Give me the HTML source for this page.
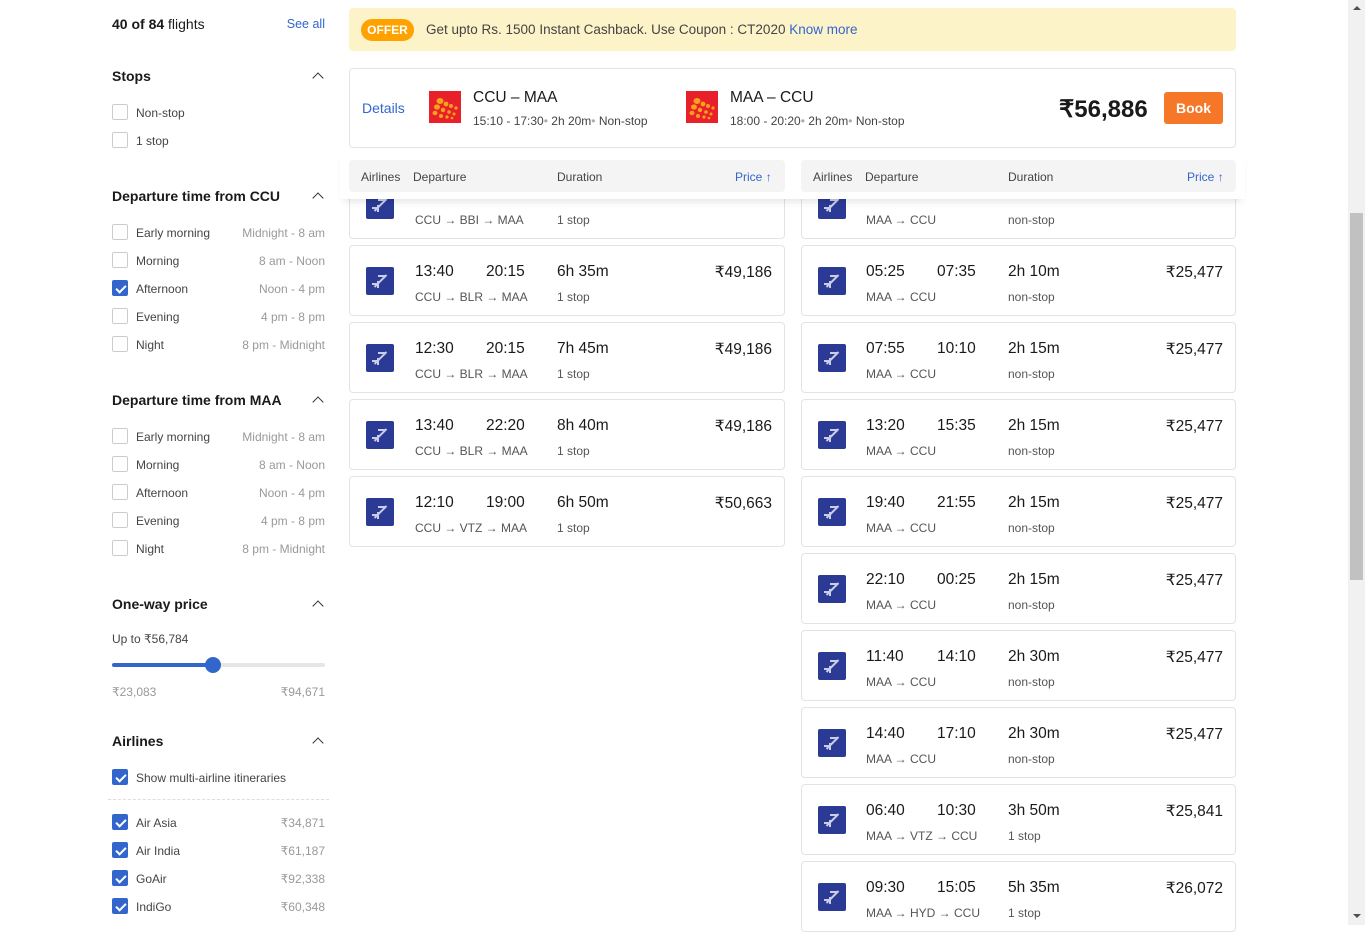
<!DOCTYPE html>
<html><head><meta charset="utf-8"><style>
*{margin:0;padding:0;box-sizing:border-box}
body{width:1365px;height:925px;overflow:hidden;background:#fff;font-family:"Liberation Sans",Arial,sans-serif;color:#1a1a1a;position:relative}
.a{position:absolute;white-space:nowrap}
.h{font-size:14px;font-weight:bold;color:#1a1a1a;transform:translateY(-50%)}
.chev{position:absolute;width:8px;height:8px;border-left:1.6px solid #333;border-top:1.6px solid #333;transform:rotate(45deg)}
.cb{position:absolute;width:16px;height:16px;border:1px solid #ccc;border-radius:2px;background:#fff}
.cb.on{background:#3366cc;border-color:#3366cc}
.cb.on:after{content:"";position:absolute;left:4.5px;top:1.5px;width:4px;height:8px;border-right:2px solid #fff;border-bottom:2px solid #fff;transform:rotate(45deg)}
.lb{font-size:12px;color:#444;transform:translateY(-50%)}
.rt{font-size:12px;color:#999;transform:translateY(-50%);text-align:right}
.card{position:absolute;border:1px solid #e3e3e3;border-radius:4px;background:#fff}
.ic{position:absolute;width:28px;height:28px;background:#2b3a95;border-radius:2px;overflow:hidden}
.ic i{position:absolute;background:#c9cde8}
.ic .l1{left:6px;top:13px;width:17px;height:2px;transform:rotate(-45deg)}
.ic .l2{left:12px;top:8px;width:8px;height:2px}
.ic .l3{left:11px;top:14px;width:2px;height:7px}
.ic .l4{left:6px;top:16px;width:5px;height:2px}
.t{position:absolute;font-size:15.5px;color:#1a1a1a;top:17px}
.s{position:absolute;font-size:12px;color:#555;top:44px}
.p{position:absolute;font-size:15.5px;color:#1a1a1a;top:17px;text-align:right}
.hd{position:absolute;background:#f4f4f4;border-radius:4px;height:32px;font-size:12px;color:#444}
.hd span{position:absolute;top:10px}
</style></head><body>

<div class="a" style="left:112px;top:16px;font-size:14px"><b>40 of 84</b> flights</div>
<div class="a" style="right:1040px;top:17px;font-size:12.5px;color:#3366cc">See all</div>

<div class="a h" style="left:112px;top:76px">Stops</div><div class="chev" style="left:314px;top:74px"></div>
<div class="cb" style="left:112px;top:104px"></div><div class="a lb" style="left:136px;top:113px">Non-stop</div>
<div class="cb" style="left:112px;top:132px"></div><div class="a lb" style="left:136px;top:141px">1 stop</div>

<div class="a h" style="left:112px;top:196px">Departure time from CCU</div><div class="chev" style="left:314px;top:194px"></div>
<div class="cb" style="left:112px;top:224px"></div><div class="a lb" style="left:136px;top:233px">Early morning</div><div class="a rt" style="right:1040px;top:233px">Midnight - 8 am</div>
<div class="cb" style="left:112px;top:252px"></div><div class="a lb" style="left:136px;top:261px">Morning</div><div class="a rt" style="right:1040px;top:261px">8 am - Noon</div>
<div class="cb on" style="left:112px;top:280px"></div><div class="a lb" style="left:136px;top:289px">Afternoon</div><div class="a rt" style="right:1040px;top:289px">Noon - 4 pm</div>
<div class="cb" style="left:112px;top:308px"></div><div class="a lb" style="left:136px;top:317px">Evening</div><div class="a rt" style="right:1040px;top:317px">4 pm - 8 pm</div>
<div class="cb" style="left:112px;top:336px"></div><div class="a lb" style="left:136px;top:345px">Night</div><div class="a rt" style="right:1040px;top:345px">8 pm - Midnight</div>

<div class="a h" style="left:112px;top:400px">Departure time from MAA</div><div class="chev" style="left:314px;top:398px"></div>
<div class="cb" style="left:112px;top:428px"></div><div class="a lb" style="left:136px;top:437px">Early morning</div><div class="a rt" style="right:1040px;top:437px">Midnight - 8 am</div>
<div class="cb" style="left:112px;top:456px"></div><div class="a lb" style="left:136px;top:465px">Morning</div><div class="a rt" style="right:1040px;top:465px">8 am - Noon</div>
<div class="cb" style="left:112px;top:484px"></div><div class="a lb" style="left:136px;top:493px">Afternoon</div><div class="a rt" style="right:1040px;top:493px">Noon - 4 pm</div>
<div class="cb" style="left:112px;top:512px"></div><div class="a lb" style="left:136px;top:521px">Evening</div><div class="a rt" style="right:1040px;top:521px">4 pm - 8 pm</div>
<div class="cb" style="left:112px;top:540px"></div><div class="a lb" style="left:136px;top:549px">Night</div><div class="a rt" style="right:1040px;top:549px">8 pm - Midnight</div>

<div class="a h" style="left:112px;top:604px">One-way price</div><div class="chev" style="left:314px;top:602px"></div>
<div class="a lb" style="left:112px;top:639px;color:#444">Up to ₹56,784</div>
<div class="a" style="left:112px;top:663px;width:213px;height:4px;background:#e6e6e6;border-radius:2px"></div>
<div class="a" style="left:112px;top:663px;width:101px;height:4px;background:#3366cc;border-radius:2px"></div>
<div class="a" style="left:205px;top:657px;width:16px;height:16px;background:#3366cc;border-radius:50%"></div>
<div class="a rt" style="left:112px;top:692px;text-align:left">₹23,083</div>
<div class="a rt" style="right:1040px;top:692px">₹94,671</div>

<div class="a h" style="left:112px;top:741px">Airlines</div><div class="chev" style="left:314px;top:739px"></div>
<div class="cb on" style="left:112px;top:769px"></div><div class="a lb" style="left:136px;top:778px">Show multi-airline itineraries</div>
<div class="a" style="left:108px;top:799px;width:221px;border-top:1px dashed #ddd"></div>
<div class="cb on" style="left:112px;top:814px"></div><div class="a lb" style="left:136px;top:823px">Air Asia</div><div class="a rt" style="right:1040px;top:823px">₹34,871</div>
<div class="cb on" style="left:112px;top:842px"></div><div class="a lb" style="left:136px;top:851px">Air India</div><div class="a rt" style="right:1040px;top:851px">₹61,187</div>
<div class="cb on" style="left:112px;top:870px"></div><div class="a lb" style="left:136px;top:879px">GoAir</div><div class="a rt" style="right:1040px;top:879px">₹92,338</div>
<div class="cb on" style="left:112px;top:898px"></div><div class="a lb" style="left:136px;top:907px">IndiGo</div><div class="a rt" style="right:1040px;top:907px">₹60,348</div>

<div class="a" style="left:349px;top:8px;width:887px;height:43px;background:#fdf3c9;border-radius:4px"></div>
<div class="a" style="left:361px;top:19px;width:53px;height:22px;background:#ffa200;border-radius:11px;color:#fff;font-size:12px;font-weight:bold;text-align:center;line-height:22px">OFFER</div>
<div class="a" style="left:426px;top:22px;font-size:13.5px;color:#444">Get upto Rs. 1500 Instant Cashback. Use Coupon : CT2020 <span style="color:#3366cc">Know more</span></div>

<div class="card" style="left:349px;top:68px;width:887px;height:80px"></div>
<div class="a" style="left:362px;top:100px;font-size:14px;color:#3366cc">Details</div>
<svg class="a" style="left:429px;top:91px" width="32" height="32"><rect width="32" height="32" fill="#e8202a"/><g fill="#f7a21b"><ellipse cx="11" cy="10" rx="3.5" ry="3"/><ellipse cx="8" cy="16" rx="3" ry="2.6"/><ellipse cx="6" cy="22" rx="2.5" ry="2.2"/><circle cx="17" cy="13" r="2.4"/><circle cx="14" cy="19" r="2.2"/><circle cx="12" cy="25" r="2"/><circle cx="22" cy="15" r="2"/><circle cx="20" cy="21" r="1.8"/><circle cx="18" cy="26" r="1.6"/><circle cx="27" cy="17" r="1.6"/><circle cx="25" cy="23" r="1.5"/><circle cx="23" cy="27" r="1.3"/></g></svg>
<div class="a" style="left:473px;top:89px;font-size:15.5px">CCU – MAA</div>
<div class="a" style="left:473px;top:114px;font-size:12px;color:#444">15:10 - 17:30<span style="color:#aaa">•</span> 2h 20m<span style="color:#aaa">•</span> Non-stop</div>
<svg class="a" style="left:686px;top:91px" width="32" height="32"><rect width="32" height="32" fill="#e8202a"/><g fill="#f7a21b"><ellipse cx="11" cy="10" rx="3.5" ry="3"/><ellipse cx="8" cy="16" rx="3" ry="2.6"/><ellipse cx="6" cy="22" rx="2.5" ry="2.2"/><circle cx="17" cy="13" r="2.4"/><circle cx="14" cy="19" r="2.2"/><circle cx="12" cy="25" r="2"/><circle cx="22" cy="15" r="2"/><circle cx="20" cy="21" r="1.8"/><circle cx="18" cy="26" r="1.6"/><circle cx="27" cy="17" r="1.6"/><circle cx="25" cy="23" r="1.5"/><circle cx="23" cy="27" r="1.3"/></g></svg>
<div class="a" style="left:730px;top:89px;font-size:15.5px">MAA – CCU</div>
<div class="a" style="left:730px;top:114px;font-size:12px;color:#444">18:00 - 20:20<span style="color:#aaa">•</span> 2h 20m<span style="color:#aaa">•</span> Non-stop</div>
<div class="a" style="left:1059px;top:95px;font-size:24px;font-weight:bold">₹56,886</div>
<div class="a" style="left:1164px;top:92px;width:59px;height:32px;background:#f77728;border-radius:3px;color:#fff;font-size:14px;font-weight:bold;text-align:center;line-height:32px">Book</div>

<div class="card" style="left:349px;top:168px;width:436px;height:71px"><div class="ic" style="left:16px;top:22px"><i class="l1"></i><i class="l2"></i><i class="l3"></i><i class="l4"></i></div><div class="s" style="left:65px">CCU → BBI → MAA</div><div class="s" style="left:207px">1 stop</div></div>
<div class="card" style="left:801px;top:168px;width:435px;height:71px"><div class="ic" style="left:16px;top:22px"><i class="l1"></i><i class="l2"></i><i class="l3"></i><i class="l4"></i></div><div class="s" style="left:64px">MAA → CCU</div><div class="s" style="left:206px">non-stop</div></div>
<div class="a" style="left:340px;top:150px;width:905px;height:49px;background:#fff;box-shadow:0 6px 8px -4px rgba(0,0,0,.12)"></div>
<div class="hd" style="left:349px;top:160px;width:436px"><span style="left:12px">Airlines</span><span style="left:64px">Departure</span><span style="left:208px">Duration</span><span style="left:386px;color:#3366cc">Price <b>↑</b></span></div>
<div class="hd" style="left:801px;top:160px;width:435px"><span style="left:12px">Airlines</span><span style="left:64px">Departure</span><span style="left:207px">Duration</span><span style="left:386px;color:#3366cc">Price <b>↑</b></span></div>

<div class="card" style="left:349px;top:245px;width:436px;height:71px"><div class="ic" style="left:16px;top:21px"><i class="l1"></i><i class="l2"></i><i class="l3"></i><i class="l4"></i></div><div class="t" style="left:65px">13:40</div><div class="t" style="left:136px">20:15</div><div class="t" style="left:207px">6h 35m</div><div class="p" style="right:12px">₹49,186</div><div class="s" style="left:65px">CCU → BLR → MAA</div><div class="s" style="left:207px">1 stop</div></div>
<div class="card" style="left:349px;top:322px;width:436px;height:71px"><div class="ic" style="left:16px;top:21px"><i class="l1"></i><i class="l2"></i><i class="l3"></i><i class="l4"></i></div><div class="t" style="left:65px">12:30</div><div class="t" style="left:136px">20:15</div><div class="t" style="left:207px">7h 45m</div><div class="p" style="right:12px">₹49,186</div><div class="s" style="left:65px">CCU → BLR → MAA</div><div class="s" style="left:207px">1 stop</div></div>
<div class="card" style="left:349px;top:399px;width:436px;height:71px"><div class="ic" style="left:16px;top:21px"><i class="l1"></i><i class="l2"></i><i class="l3"></i><i class="l4"></i></div><div class="t" style="left:65px">13:40</div><div class="t" style="left:136px">22:20</div><div class="t" style="left:207px">8h 40m</div><div class="p" style="right:12px">₹49,186</div><div class="s" style="left:65px">CCU → BLR → MAA</div><div class="s" style="left:207px">1 stop</div></div>
<div class="card" style="left:349px;top:476px;width:436px;height:71px"><div class="ic" style="left:16px;top:21px"><i class="l1"></i><i class="l2"></i><i class="l3"></i><i class="l4"></i></div><div class="t" style="left:65px">12:10</div><div class="t" style="left:136px">19:00</div><div class="t" style="left:207px">6h 50m</div><div class="p" style="right:12px">₹50,663</div><div class="s" style="left:65px">CCU → VTZ → MAA</div><div class="s" style="left:207px">1 stop</div></div>

<div class="card" style="left:801px;top:245px;width:435px;height:71px"><div class="ic" style="left:16px;top:21px"><i class="l1"></i><i class="l2"></i><i class="l3"></i><i class="l4"></i></div><div class="t" style="left:64px">05:25</div><div class="t" style="left:135px">07:35</div><div class="t" style="left:206px">2h 10m</div><div class="p" style="right:12px">₹25,477</div><div class="s" style="left:64px">MAA → CCU</div><div class="s" style="left:206px">non-stop</div></div>
<div class="card" style="left:801px;top:322px;width:435px;height:71px"><div class="ic" style="left:16px;top:21px"><i class="l1"></i><i class="l2"></i><i class="l3"></i><i class="l4"></i></div><div class="t" style="left:64px">07:55</div><div class="t" style="left:135px">10:10</div><div class="t" style="left:206px">2h 15m</div><div class="p" style="right:12px">₹25,477</div><div class="s" style="left:64px">MAA → CCU</div><div class="s" style="left:206px">non-stop</div></div>
<div class="card" style="left:801px;top:399px;width:435px;height:71px"><div class="ic" style="left:16px;top:21px"><i class="l1"></i><i class="l2"></i><i class="l3"></i><i class="l4"></i></div><div class="t" style="left:64px">13:20</div><div class="t" style="left:135px">15:35</div><div class="t" style="left:206px">2h 15m</div><div class="p" style="right:12px">₹25,477</div><div class="s" style="left:64px">MAA → CCU</div><div class="s" style="left:206px">non-stop</div></div>
<div class="card" style="left:801px;top:476px;width:435px;height:71px"><div class="ic" style="left:16px;top:21px"><i class="l1"></i><i class="l2"></i><i class="l3"></i><i class="l4"></i></div><div class="t" style="left:64px">19:40</div><div class="t" style="left:135px">21:55</div><div class="t" style="left:206px">2h 15m</div><div class="p" style="right:12px">₹25,477</div><div class="s" style="left:64px">MAA → CCU</div><div class="s" style="left:206px">non-stop</div></div>
<div class="card" style="left:801px;top:553px;width:435px;height:71px"><div class="ic" style="left:16px;top:21px"><i class="l1"></i><i class="l2"></i><i class="l3"></i><i class="l4"></i></div><div class="t" style="left:64px">22:10</div><div class="t" style="left:135px">00:25</div><div class="t" style="left:206px">2h 15m</div><div class="p" style="right:12px">₹25,477</div><div class="s" style="left:64px">MAA → CCU</div><div class="s" style="left:206px">non-stop</div></div>
<div class="card" style="left:801px;top:630px;width:435px;height:71px"><div class="ic" style="left:16px;top:21px"><i class="l1"></i><i class="l2"></i><i class="l3"></i><i class="l4"></i></div><div class="t" style="left:64px">11:40</div><div class="t" style="left:135px">14:10</div><div class="t" style="left:206px">2h 30m</div><div class="p" style="right:12px">₹25,477</div><div class="s" style="left:64px">MAA → CCU</div><div class="s" style="left:206px">non-stop</div></div>
<div class="card" style="left:801px;top:707px;width:435px;height:71px"><div class="ic" style="left:16px;top:21px"><i class="l1"></i><i class="l2"></i><i class="l3"></i><i class="l4"></i></div><div class="t" style="left:64px">14:40</div><div class="t" style="left:135px">17:10</div><div class="t" style="left:206px">2h 30m</div><div class="p" style="right:12px">₹25,477</div><div class="s" style="left:64px">MAA → CCU</div><div class="s" style="left:206px">non-stop</div></div>
<div class="card" style="left:801px;top:784px;width:435px;height:71px"><div class="ic" style="left:16px;top:21px"><i class="l1"></i><i class="l2"></i><i class="l3"></i><i class="l4"></i></div><div class="t" style="left:64px">06:40</div><div class="t" style="left:135px">10:30</div><div class="t" style="left:206px">3h 50m</div><div class="p" style="right:12px">₹25,841</div><div class="s" style="left:64px">MAA → VTZ → CCU</div><div class="s" style="left:206px">1 stop</div></div>
<div class="card" style="left:801px;top:861px;width:435px;height:71px"><div class="ic" style="left:16px;top:21px"><i class="l1"></i><i class="l2"></i><i class="l3"></i><i class="l4"></i></div><div class="t" style="left:64px">09:30</div><div class="t" style="left:135px">15:05</div><div class="t" style="left:206px">5h 35m</div><div class="p" style="right:12px">₹26,072</div><div class="s" style="left:64px">MAA → HYD → CCU</div><div class="s" style="left:206px">1 stop</div></div>

<div class="a" style="left:1348px;top:0;width:17px;height:925px;background:#f1f1f1"></div>
<div class="a" style="left:1350px;top:213px;width:13px;height:367px;background:#c1c1c1"></div>
<div class="a" style="left:1353px;top:6px;width:0;height:0;border-left:4px solid transparent;border-right:4px solid transparent;border-bottom:4px solid #505050"></div>
<div class="a" style="left:1353px;top:914px;width:0;height:0;border-left:4px solid transparent;border-right:4px solid transparent;border-top:4px solid #505050"></div>
</body></html>
